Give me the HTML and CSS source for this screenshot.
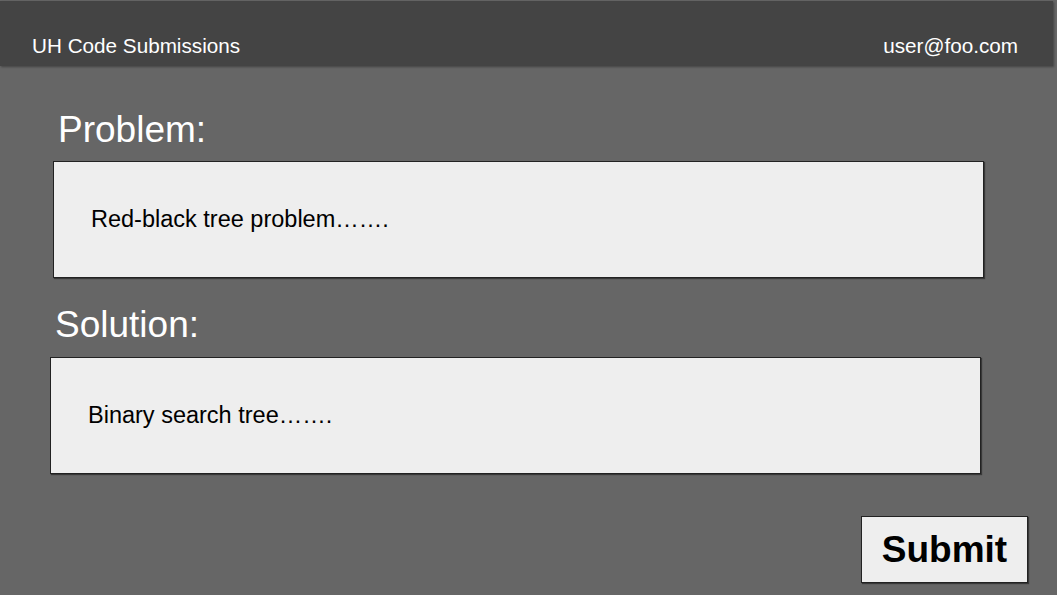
FILE: index.html
```html
<!DOCTYPE html>
<html>
<head>
<meta charset="utf-8">
<link rel="stylesheet" href="styles.css">
</head>
<body>
<header class="topbar">
  <span class="brand">UH Code Submissions</span>
  <span class="user">user@foo.com</span>
</header>
<main class="content">
  <section class="field field-problem">
    <h2 class="label">Problem:</h2>
    <div class="box">Red-black tree problem…….</div>
  </section>
  <section class="field field-solution">
    <h2 class="label">Solution:</h2>
    <div class="box">Binary search tree…….</div>
  </section>
  <div class="actions">
    <button class="submit">Submit</button>
  </div>
</main>
</body>
</html>
```
FILE: styles.css
```css
html, body {
  margin: 0;
  padding: 0;
  background: #666666;
  font-family: "Liberation Sans", Arial, sans-serif;
  height: 100%;
  overflow: hidden;
}

.topbar {
  margin: 1px 4px 0 0;
  height: 65px;
  background: #444444;
  box-shadow: 1px 1px 2px rgba(0, 0, 0, 0.35);
  display: flex;
  justify-content: space-between;
  align-items: flex-end;
  padding: 0 35px 8px 32px;
  box-sizing: border-box;
  color: #ffffff;
  font-size: 20.7px;
}

.content {
  display: flex;
  flex-direction: column;
}

.field {
  display: flex;
  flex-direction: column;
}

.field-problem {
  padding: 43px 0 0 53px;
}

.field-solution {
  padding: 26px 0 0 50px;
}

.label {
  margin: 0 0 11px 5px;
  font-size: 37px;
  font-weight: normal;
  color: #ffffff;
  line-height: 41px;
}

.field-solution .label {
  margin-bottom: 12px;
}

.box {
  height: 115px;
  background: #eeeeee;
  border: 1px solid #222222;
  box-shadow: 1px 1px 1px rgba(0, 0, 0, 0.45);
  display: flex;
  align-items: center;
  padding-left: 37px;
  box-sizing: content-box;
  font-size: 23.5px;
  color: #000000;
}

.field .box {
  width: 892px;
}

.actions {
  display: flex;
  justify-content: flex-end;
  padding: 42px 29px 0 0;
}

.submit {
  width: 167px;
  height: 67px;
  background: #eeeeee;
  border: 1px solid #222222;
  box-shadow: 1px 1px 1px rgba(0, 0, 0, 0.45);
  font-family: "Liberation Sans", Arial, sans-serif;
  font-weight: bold;
  font-size: 37px;
  color: #000000;
  padding: 0;
  box-sizing: border-box;
}
```
